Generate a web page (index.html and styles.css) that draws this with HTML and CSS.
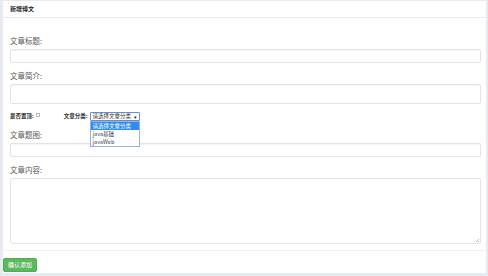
FILE: index.html
```html
<!DOCTYPE html>
<html lang="zh-CN">
<head>
<meta charset="utf-8">
<title>新增博文</title>
<link rel="stylesheet" href="styles.css">
</head>
<body>
<div class="panel">
  <div class="panel-heading">新增博文</div>
  <form class="panel-body">
    <div class="form-group first">
      <label class="label">文章标题:</label>
      <input class="input" type="text">
    </div>
    <div class="form-group">
      <label class="label">文章简介:</label>
      <input class="input tall" type="text">
    </div>
    <div class="inline-row">
      <span class="small-label">是否置顶:</span>
      <span class="checkbox"></span>
      <span class="small-label cat">文章分类:</span>
      <div class="select-wrap">
        <div class="select">请选择文章分类<span class="arrow">▾</span></div>
        <ul class="dropdown">
          <li class="active">请选择文章分类</li>
          <li>java基础</li>
          <li>javaWeb</li>
        </ul>
      </div>
    </div>
    <div class="form-group after-row">
      <label class="label">文章题图:</label>
      <input class="input" type="text">
    </div>
    <div class="form-group">
      <label class="label">文章内容:</label>
      <textarea class="textarea"></textarea>
    </div>
  </form>
  <div class="panel-footer">
    <button class="btn" type="button">确认添加</button>
  </div>
</div>
</body>
</html>
```
FILE: styles.css
```css
html, body {
  margin: 0;
  padding: 0;
}
body {
  background: #e6ebf2;
  width: 488px;
  height: 276px;
  overflow: hidden;
  font-family: "Noto Sans CJK SC", "Noto Sans", sans-serif;
  padding-top: 1px;
  box-sizing: border-box;
}
.panel {
  margin: 0 2px 0 3px;
  background: #fff;
  height: 272px;
  display: flex;
  flex-direction: column;
}
.panel-heading {
  height: 16px;
  border-bottom: 1px solid #ececec;
  padding-left: 7px;
  font-size: 6px;
  font-weight: bold;
  color: #222;
  line-height: 16px;
  flex: none;
}
.panel-body {
  margin: 0;
  padding: 0 5px 0 7px;
  height: 233px;
  box-sizing: border-box;
  border-bottom: 1px solid #f2f2f2;
  flex: none;
}
.form-group {
  display: flex;
  flex-direction: column;
}
.form-group.first {
  padding-top: 18px;
}
.label {
  display: block;
  font-size: 7.5px;
  line-height: 10px;
  color: #5a5a5a;
  font-weight: 400;
  margin: 8px 0 3px;
}
.form-group.first .label {
  margin-top: 0;
}
.form-group.after-row .label {
  margin-top: 9px;
}
.input {
  display: block;
  box-sizing: border-box;
  width: 471px;
  height: 14px;
  border: 1px solid #e3e3e3;
  border-radius: 2px;
  box-shadow: inset 0 1px 1px rgba(0,0,0,0.04);
  margin: 0;
  padding: 0;
  background: #fff;
}
.input.tall {
  height: 20px;
}
.textarea {
  display: block;
  box-sizing: border-box;
  width: 471px;
  height: 66px;
  border: 1px solid #e3e3e3;
  border-radius: 2px;
  margin: 0;
  padding: 0;
  resize: none;
  background-color: #fff;
  background-image: linear-gradient(135deg, transparent 55%, #bbb 55%, #bbb 65%, transparent 65%, transparent 80%, #bbb 80%);
  background-size: 4px 4px;
  background-position: right 1px bottom 1px;
  background-repeat: no-repeat;
}
.inline-row {
  display: flex;
  align-items: center;
  height: 9px;
  margin-top: 8px;
  margin-bottom: 0;
}
.small-label {
  font-size: 5.5px;
  font-weight: bold;
  color: #333;
  line-height: 9px;
}
.checkbox {
  box-sizing: border-box;
  width: 4px;
  height: 4px;
  border: 1px solid #bbb;
  margin-left: 2px;
  margin-top: -3px;
  background: #fff;
}
.cat {
  margin-left: 24px;
}
.select-wrap {
  position: relative;
  margin-left: 2px;
}
.select {
  box-sizing: border-box;
  width: 50px;
  height: 9px;
  border: 1px solid #6b8ec7;
  border-radius: 1px;
  font-size: 5.5px;
  line-height: 7px;
  padding-left: 2px;
  color: #333;
  position: relative;
  background: #fff;
}
.arrow {
  position: absolute;
  right: 2px;
  top: 0;
  font-size: 5px;
  color: #222;
}
.dropdown {
  position: absolute;
  left: 0;
  top: 9px;
  width: 50px;
  box-sizing: border-box;
  margin: 0;
  padding: 0;
  list-style: none;
  border: 1px solid #9ab0d6;
  background: #fff;
  z-index: 5;
}
.dropdown li {
  font-size: 5.5px;
  line-height: 8px;
  height: 8px;
  padding-left: 2px;
  color: #444;
}
.dropdown li.active {
  background: #2e8cf0;
  color: #fff;
}
.panel-footer {
  flex: 1;
  padding-top: 7px;
}
.btn {
  display: block;
  width: 34px;
  height: 14px;
  margin: 0;
  padding: 0;
  border: 1px solid #4cae4c;
  border-radius: 2px;
  background: #5cb85c;
  color: #fff;
  font-family: "Noto Sans CJK SC", sans-serif;
  font-size: 6px;
  line-height: 12px;
  text-align: center;
}
```
